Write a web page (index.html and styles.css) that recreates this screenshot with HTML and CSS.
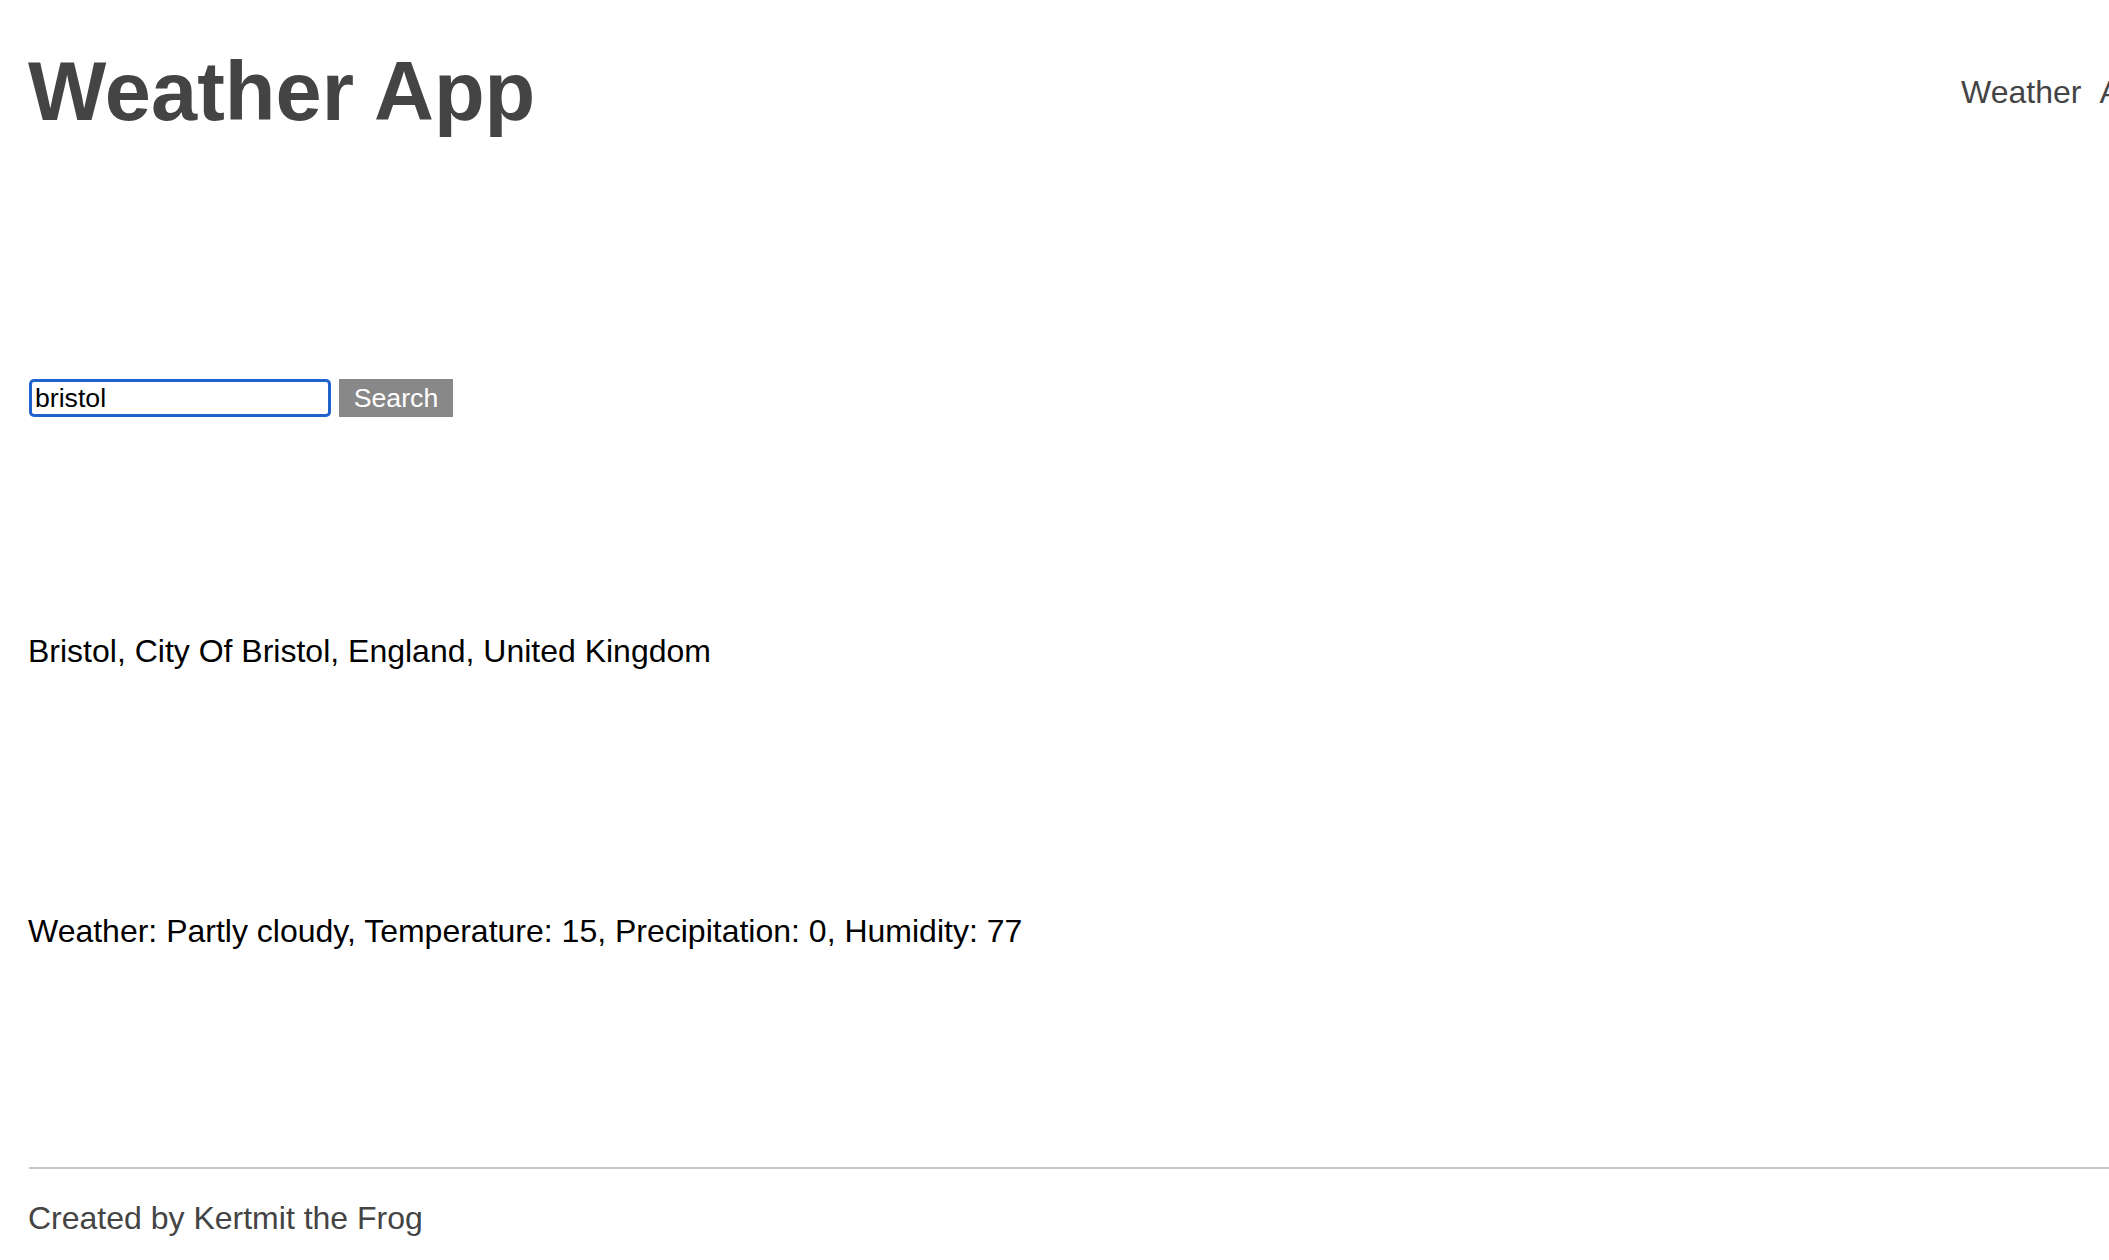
FILE: index.html
```html
<!DOCTYPE html>
<html lang="en">
<head>
<meta charset="utf-8">
<title>Weather App</title>
<link rel="stylesheet" href="styles.css">
</head>
<body>
<div class="page">
  <header class="header">
    <h1 class="title">Weather App</h1>
    <nav class="nav">
      <a class="nav-link" href="#">Weather</a>
      <a class="nav-link" href="#">About</a>
    </nav>
  </header>
  <form class="search" onsubmit="return false">
    <input class="search-input" type="text" value="bristol">
    <button class="search-btn" type="submit">Search</button>
  </form>
  <p class="location">Bristol, City Of Bristol, England, United Kingdom</p>
  <p class="weather">Weather: Partly cloudy, Temperature: 15, Precipitation: 0, Humidity: 77</p>
  <footer class="footer">
    <div class="rule"></div>
    <p class="credit">Created by Kertmit the Frog</p>
  </footer>
</div>
</body>
</html>
```
FILE: styles.css
```css
html, body {
  margin: 0;
  padding: 0;
  background: #ffffff;
  overflow-x: hidden;
}

body {
  font-family: "Liberation Sans", Arial, Helvetica, sans-serif;
  color: #000000;
}

.page {
  width: 2211px;
  box-sizing: border-box;
  padding: 45px 28px 0 28px;
}

.header {
  display: flex;
  align-items: center;
  justify-content: space-between;
}

.title {
  margin: 0;
  font-size: 83px;
  line-height: 94px;
  font-weight: bold;
  color: #444444;
}

.nav {
  display: flex;
  gap: 18px;
}

.nav-link {
  font-size: 32px;
  line-height: 37px;
  color: #444444;
  text-decoration: none;
}

.search {
  display: flex;
  gap: 8px;
  margin: 240px 0 0 1px;
  height: 38px;
}

.search-input {
  box-sizing: border-box;
  width: 302px;
  height: 38px;
  margin: 0;
  padding: 0 3px;
  border: 3px solid #1f62cc;
  border-radius: 5px;
  font-family: "Liberation Sans", Arial, Helvetica, sans-serif;
  font-size: 26.67px;
  color: #000000;
  outline: none;
  background: #ffffff;
}

.search-btn {
  box-sizing: border-box;
  width: 114px;
  height: 38px;
  margin: 0;
  padding: 0;
  border: none;
  background: #888888;
  color: #ffffff;
  font-family: "Liberation Sans", Arial, Helvetica, sans-serif;
  font-size: 26.67px;
  line-height: 38px;
  text-align: center;
}

.location {
  margin: 216px 0 0 0;
  font-size: 32px;
  line-height: 37px;
}

.weather {
  margin: 243px 0 0 0;
  font-size: 32px;
  line-height: 37px;
}

.footer {
  margin-top: 217px;
}

.rule {
  height: 2px;
  margin-left: 1px;
  background: #c4c4c4;
}

.credit {
  margin: 31px 0 0 0;
  font-size: 32px;
  line-height: 37px;
  color: #444444;
}
```
